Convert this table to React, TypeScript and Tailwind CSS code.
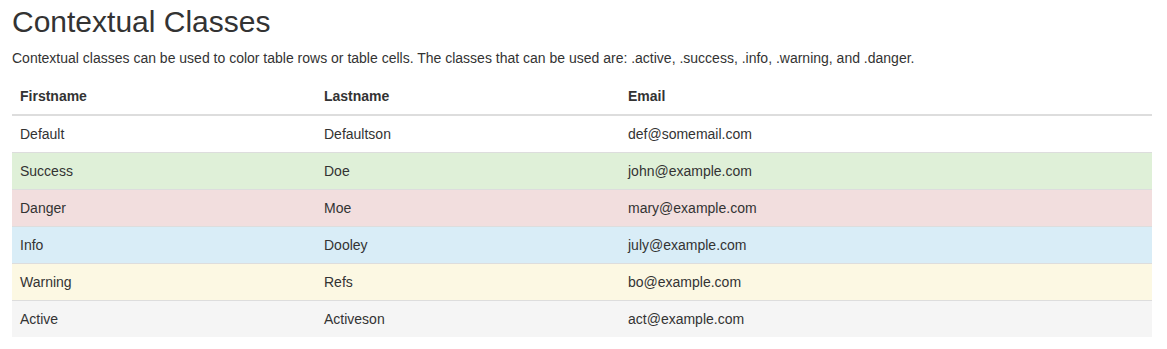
import React from 'react';

const rows = [
  { first: 'Default', last: 'Defaultson', email: 'def@somemail.com', bg: 'bg-white' },
  { first: 'Success', last: 'Doe', email: 'john@example.com', bg: 'bg-[#dff0d8]' },
  { first: 'Danger', last: 'Moe', email: 'mary@example.com', bg: 'bg-[#f2dede]' },
  { first: 'Info', last: 'Dooley', email: 'july@example.com', bg: 'bg-[#d9edf7]' },
  { first: 'Warning', last: 'Refs', email: 'bo@example.com', bg: 'bg-[#fcf8e3]' },
  { first: 'Active', last: 'Activeson', email: 'act@example.com', bg: 'bg-[#f5f5f5]' },
];

const App: React.FC = () => {
  return (
    <div className="bg-white min-h-[349px] px-[12px] text-[#333] font-['Liberation_Sans',Arial,sans-serif] text-[14px] leading-[20px]">
      <h2 className="pt-[5px] text-[30px] leading-[33px] font-normal">Contextual Classes</h2>
      <p className="mt-[10px] mb-[10px]">
        Contextual classes can be used to color table rows or table cells. The classes that can be used are: .active, .success, .info, .warning, and .danger.
      </p>
      <table className="w-[1140px] table-fixed border-collapse">
        <colgroup>
          <col className="w-[304px]" />
          <col className="w-[304px]" />
          <col />
        </colgroup>
        <thead>
          <tr>
            <th className="p-[8px] text-left font-bold border-b-2 border-[#ddd]">Firstname</th>
            <th className="p-[8px] text-left font-bold border-b-2 border-[#ddd]">Lastname</th>
            <th className="p-[8px] text-left font-bold border-b-2 border-[#ddd]">Email</th>
          </tr>
        </thead>
        <tbody>
          {rows.map((r, i) => (
            <tr key={r.first} className={r.bg}>
              <td className={`p-[8px] ${i > 0 ? 'border-t border-[#ddd]' : ''}`}>{r.first}</td>
              <td className={`p-[8px] ${i > 0 ? 'border-t border-[#ddd]' : ''}`}>{r.last}</td>
              <td className={`p-[8px] ${i > 0 ? 'border-t border-[#ddd]' : ''}`}>{r.email}</td>
            </tr>
          ))}
        </tbody>
      </table>
    </div>
  );
};

export default App;
